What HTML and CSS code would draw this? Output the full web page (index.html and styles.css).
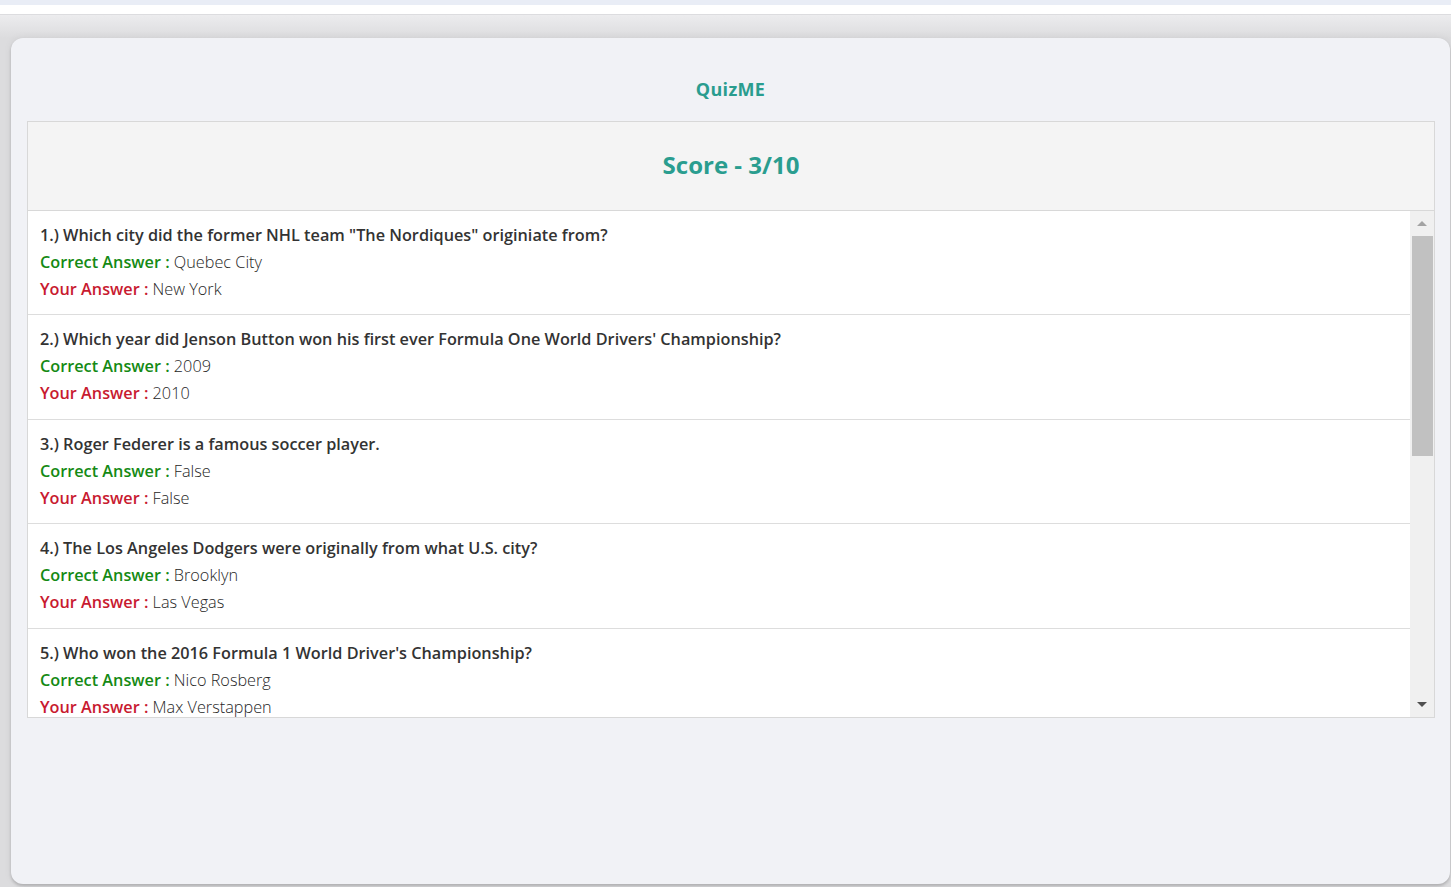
FILE: index.html
```html
<!DOCTYPE html>
<html lang="en">
<head>
<meta charset="utf-8">
<title>QuizME</title>
<link rel="stylesheet" href="styles.css">
</head>
<body>
<header class="topbar"></header>
<main class="stage">
  <section class="card">
    <h1 class="brand">QuizME</h1>
    <div class="score">Score - 3/10</div>
    <div class="results-wrap">
      <ul class="results">
        <li class="result">
          <p class="question">1.) Which city did the former NHL team "The Nordiques" originiate from?</p>
          <p class="line"><span class="label correct">Correct Answer :</span> Quebec City</p>
          <p class="line"><span class="label yours">Your Answer :</span> New York</p>
        </li>
        <li class="result">
          <p class="question">2.) Which year did Jenson Button won his first ever Formula One World Drivers' Championship?</p>
          <p class="line"><span class="label correct">Correct Answer :</span> 2009</p>
          <p class="line"><span class="label yours">Your Answer :</span> 2010</p>
        </li>
        <li class="result">
          <p class="question">3.) Roger Federer is a famous soccer player.</p>
          <p class="line"><span class="label correct">Correct Answer :</span> False</p>
          <p class="line"><span class="label yours">Your Answer :</span> False</p>
        </li>
        <li class="result">
          <p class="question">4.) The Los Angeles Dodgers were originally from what U.S. city?</p>
          <p class="line"><span class="label correct">Correct Answer :</span> Brooklyn</p>
          <p class="line"><span class="label yours">Your Answer :</span> Las Vegas</p>
        </li>
        <li class="result">
          <p class="question">5.) Who won the 2016 Formula 1 World Driver's Championship?</p>
          <p class="line"><span class="label correct">Correct Answer :</span> Nico Rosberg</p>
          <p class="line"><span class="label yours">Your Answer :</span> Max Verstappen</p>
        </li>
      </ul>
      <div class="scrollbar" aria-hidden="true">
        <div class="sb-btn"><span class="arrow-up"></span></div>
        <div class="sb-thumb"></div>
        <div class="sb-rest"></div>
        <div class="sb-btn"><span class="arrow-down"></span></div>
      </div>
    </div>
  </section>
</main>
</body>
</html>
```

FILE: styles.css
```css
html, body {
  margin: 0;
  padding: 0;
  height: 100%;
}

body {
  font-family: "Open Sans", "Liberation Sans", sans-serif;
  background: #e2e2e4;
  overflow: hidden;
  color: #333;
}

.topbar {
  display: block;
  height: 9px;
  background: #ffffff;
  border-top: 5px solid #e9edf6;
  border-bottom: 1px solid #dcdcdf;
}

.stage {
  display: flex;
  padding: 23px 1px 0 11px;
  background: linear-gradient(to bottom, #ececee 0, #dcdcde 23px, #dcdcde 100%);
  height: calc(100% - 15px);
  box-sizing: border-box;
}

.card {
  flex: 1;
  height: 846px;
  box-sizing: border-box;
  background: #f1f2f6;
  border-radius: 12px;
  padding: 39px 16px 0 16px;
  box-shadow: 0 2px 3px rgba(0, 0, 0, 0.18), 0 0 8px rgba(0, 0, 0, 0.06);
}

.brand {
  margin: 0 0 20px 0;
  font-size: 18px;
  line-height: 24px;
  font-weight: 700;
  text-align: center;
  color: #2a9d8f;
  letter-spacing: 0.3px;
}

.score {
  height: 88px;
  line-height: 86px;
  text-align: center;
  font-size: 24px;
  font-weight: 700;
  color: #2a9d8f;
  background: #f4f4f4;
  border: 1px solid #d8d8d8;
  margin-right: -1px;
}

.results-wrap {
  display: flex;
  height: 507px;
  box-sizing: border-box;
  background: #ffffff;
  border: 1px solid #d8d8d8;
  border-top: none;
  margin-right: -1px;
}

.results {
  flex: 1;
  list-style: none;
  margin: 0;
  padding: 0;
  overflow: hidden;
}

.result {
  padding: 11px 12px 11.4px 12px;
  border-bottom: 1px solid #dddddd;
}

.question,
.line {
  margin: 0;
  font-size: 16.25px;
  line-height: 27px;
  white-space: nowrap;
}

.question {
  font-weight: 600;
  color: #333333;
}

.line {
  font-weight: 300;
  color: #262626;
}

.label {
  font-weight: 600;
}

.correct {
  color: #148a14;
}

.yours {
  color: #c81a30;
}

.scrollbar {
  width: 24px;
  display: flex;
  flex-direction: column;
  background: #f0f0f0;
}

.sb-btn {
  height: 25px;
  display: flex;
  align-items: center;
  justify-content: center;
}

.arrow-up {
  width: 0;
  height: 0;
  border-left: 5px solid transparent;
  border-right: 5px solid transparent;
  border-bottom: 5px solid #a3a3a3;
}

.arrow-down {
  width: 0;
  height: 0;
  border-left: 5px solid transparent;
  border-right: 5px solid transparent;
  border-top: 5px solid #505050;
}

.sb-thumb {
  height: 220px;
  margin: 0 1px 0 2px;
  background: #c1c1c1;
}

.sb-rest {
  flex: 1;
}
```
